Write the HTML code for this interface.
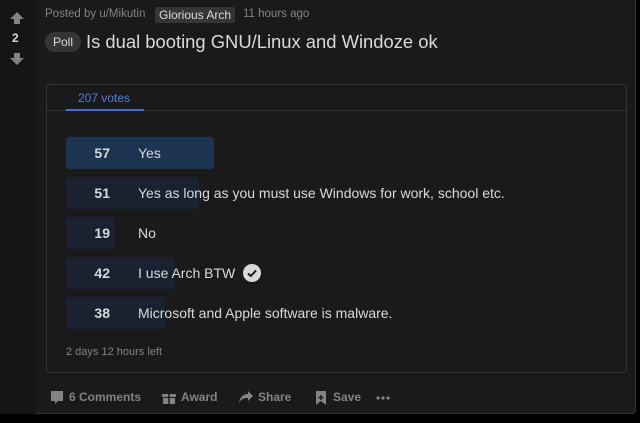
<!DOCTYPE html>
<html><head><style>
body{margin:0;width:640px;height:423px;background:#000;font-family:"Liberation Sans",sans-serif;overflow:hidden;position:relative}
.card{position:absolute;left:0;top:0;width:636px;height:414px;background:#1a1a1b;border-radius:0 0 4px 0;border-right:1px solid #343536;border-bottom:1px solid #343536;box-sizing:border-box}
.side{position:absolute;left:0;top:0;width:36px;height:414px;background:#151516}
.abs{position:absolute;white-space:nowrap}
.poll{position:absolute;left:46px;top:84px;width:581px;height:289px;border:1px solid #343536;border-radius:4px;box-sizing:border-box}
.bar{position:absolute;left:66px;height:32px;border-radius:3px;background:#1a2232}
.num{position:absolute;left:66px;width:44px;text-align:right;color:#d7dadc;font-weight:bold;font-size:14px}
.lab{position:absolute;left:138px;color:#d7dadc;font-size:14px}
.act{position:absolute;top:390px;color:#818384;font-weight:bold;font-size:12px}
</style></head><body>
<div class="card"></div>
<div class="side"></div>
<svg class="abs" style="left:9px;top:11px" width="16" height="14" viewBox="0 0 16 14"><path d="M8 1 L15 8 H11 V13 H5 V8 H1 Z" fill="#818384"/></svg>
<div class="abs" style="left:12px;top:31px;color:#d7dadc;font-weight:bold;font-size:12px">2</div>
<svg class="abs" style="left:9px;top:52px" width="16" height="14" viewBox="0 0 16 14"><path d="M8 13 L15 6 H11 V1 H5 V6 H1 Z" fill="#818384"/></svg>
<div class="abs" style="left:45px;top:8px;color:#818384;font-size:11.5px">Posted by u/Mikutin</div>
<div class="abs" style="left:155px;top:7px;background:#343536;color:#d7dadc;font-size:12px;padding:1px 4px;border-radius:2px">Glorious Arch</div>
<div class="abs" style="left:243px;top:8px;color:#818384;font-size:11.5px">11 hours ago</div>
<div class="abs" style="left:45px;top:32px;background:#343536;color:#d7dadc;font-size:12px;padding:3px 8px;border-radius:10px">Poll</div>
<div class="abs" style="left:86px;top:31px;color:#d7dadc;font-size:18.4px">Is dual booting GNU/Linux and Windoze ok</div>
<div class="poll"></div>
<div class="abs" style="left:47px;top:110px;width:579px;height:1px;background:#343536"></div>
<div class="abs" style="left:78px;top:91px;color:#4f7fd8;font-size:12px">207 votes</div>
<div class="abs" style="left:66px;top:109px;width:78px;height:2px;background:#3d6fd6"></div>
<div class="bar" style="top:137px;width:148px;background:#1c3352"></div>
<div class="bar" style="top:177px;width:133px"></div>
<div class="bar" style="top:217px;width:49px"></div>
<div class="bar" style="top:257px;width:109px"></div>
<div class="bar" style="top:297px;width:99px"></div>
<div class="num" style="top:145px">57</div><div class="lab" style="top:145px">Yes</div>
<div class="num" style="top:185px">51</div><div class="lab" style="top:185px">Yes as long as you must use Windows for work, school etc.</div>
<div class="num" style="top:225px">19</div><div class="lab" style="top:225px">No</div>
<div class="num" style="top:265px">42</div><div class="lab" style="top:265px">I use Arch BTW</div>
<svg class="abs" style="left:242px;top:263px" width="20" height="20" viewBox="0 0 20 20"><circle cx="10" cy="10" r="9" fill="#d7dadc"/><path d="M6 10.5 L8.8 13 L14 7.5" stroke="#1a1a1b" stroke-width="2" fill="none"/></svg>
<div class="num" style="top:305px">38</div><div class="lab" style="top:305px">Microsoft and Apple software is malware.</div>
<div class="abs" style="left:66px;top:346px;color:#818384;font-size:11px">2 days 12 hours left</div>
<svg class="abs" style="left:50px;top:390px" width="14" height="15" viewBox="0 0 14 15"><path d="M1 1 H13 V11 H8 L5 14 V11 H1 Z" fill="#818384"/></svg>
<div class="act" style="left:69px">6 Comments</div>
<svg class="abs" style="left:161px;top:389px" width="16" height="16" viewBox="0 0 16 16"><path d="M1 5 H15 V8 H1 Z M2 9 H14 V15 H2 Z" fill="#818384"/><path d="M8 5 V15 M5 2 L8 5 L11 2" stroke="#1a1a1b" stroke-width="1.5" fill="none"/></svg>
<div class="act" style="left:181px">Award</div>
<svg class="abs" style="left:238px;top:390px" width="16" height="14" viewBox="0 0 16 14"><path d="M10 1 L15 6 L10 11 V8 C6 8 3 9 1 13 C2 7 5 4 10 4 Z" fill="#818384"/></svg>
<div class="act" style="left:258px">Share</div>
<svg class="abs" style="left:315px;top:390px" width="12" height="16" viewBox="0 0 12 16"><path d="M1 1 H11 V15 L6 11 L1 15 Z" fill="#818384"/><path d="M6 5 V10 M3.5 7.5 H8.5" stroke="#1a1a1b" stroke-width="1.5"/></svg>
<div class="act" style="left:333px">Save</div>
<svg class="abs" style="left:376px;top:396px" width="14" height="4" viewBox="0 0 14 4"><circle cx="2" cy="2" r="1.6" fill="#818384"/><circle cx="7" cy="2" r="1.6" fill="#818384"/><circle cx="12" cy="2" r="1.6" fill="#818384"/></svg>
</body></html>
